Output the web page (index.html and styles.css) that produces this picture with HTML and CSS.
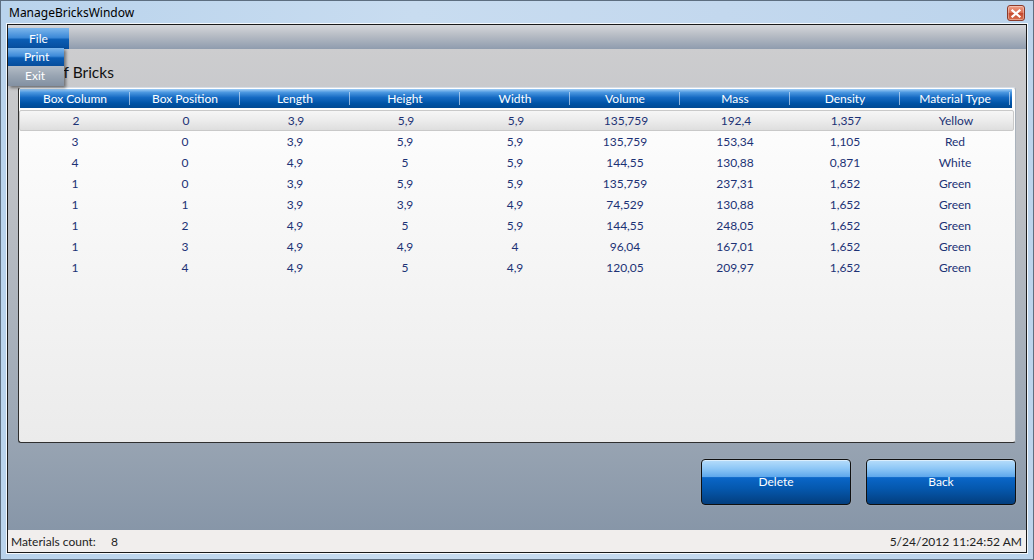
FILE: index.html
```html
<!DOCTYPE html>
<html>
<head>
<meta charset="utf-8">
<link rel="stylesheet" href="styles.css">
</head>
<body>
<div class="window">
  <div class="titlebar">
    <span class="title">ManageBricksWindow</span>
    <div class="close"><svg width="10" height="9" viewBox="0 0 10 9"><path d="M1.5 1.5 L8.5 7.5 M8.5 1.5 L1.5 7.5" stroke="#fff" stroke-width="2.2" stroke-linecap="square"/></svg></div>
  </div>
  <div class="client">
    <div class="menubar">
      <div class="menu-file">File</div>
    </div>
    <div class="content">
      <div class="heading">List of Bricks</div>
      <div class="grid">
        <div class="grid-head">
          <div class="hc">Box Column</div><div class="hc">Box Position</div><div class="hc">Length</div><div class="hc">Height</div><div class="hc">Width</div><div class="hc">Volume</div><div class="hc">Mass</div><div class="hc">Density</div><div class="hc">Material Type</div>
        </div>
        <div class="row selected"><div>2</div><div>0</div><div>3,9</div><div>5,9</div><div>5,9</div><div>135,759</div><div>192,4</div><div>1,357</div><div>Yellow</div></div>
        <div class="row"><div>3</div><div>0</div><div>3,9</div><div>5,9</div><div>5,9</div><div>135,759</div><div>153,34</div><div>1,105</div><div>Red</div></div>
        <div class="row"><div>4</div><div>0</div><div>4,9</div><div>5</div><div>5,9</div><div>144,55</div><div>130,88</div><div>0,871</div><div>White</div></div>
        <div class="row"><div>1</div><div>0</div><div>3,9</div><div>5,9</div><div>5,9</div><div>135,759</div><div>237,31</div><div>1,652</div><div>Green</div></div>
        <div class="row"><div>1</div><div>1</div><div>3,9</div><div>3,9</div><div>4,9</div><div>74,529</div><div>130,88</div><div>1,652</div><div>Green</div></div>
        <div class="row"><div>1</div><div>2</div><div>4,9</div><div>5</div><div>5,9</div><div>144,55</div><div>248,05</div><div>1,652</div><div>Green</div></div>
        <div class="row"><div>1</div><div>3</div><div>4,9</div><div>4,9</div><div>4</div><div>96,04</div><div>167,01</div><div>1,652</div><div>Green</div></div>
        <div class="row"><div>1</div><div>4</div><div>4,9</div><div>5</div><div>4,9</div><div>120,05</div><div>209,97</div><div>1,652</div><div>Green</div></div>
      </div>
      <div class="actions">
        <button class="btn">Delete</button>
        <button class="btn">Back</button>
      </div>
    </div>
    <div class="statusbar">
      <span class="count-label">Materials count:</span><span class="count">8</span>
      <span class="date">5/24/2012 11:24:52 AM</span>
    </div>
    <div class="dropdown">
      <div class="dd-item dd-print">Print</div>
      <div class="dd-item dd-exit">Exit</div>
    </div>
  </div>
</div>
</body>
</html>
```
FILE: styles.css
```css
* { box-sizing: border-box; }
html, body { margin: 0; padding: 0; }
body {
  width: 1034px;
  height: 560px;
  overflow: hidden;
  font-family: "Lato", "Noto Sans", sans-serif;
  font-size: 12px;
  background: #9fb8d2;
}
.window {
  width: 1034px;
  height: 560px;
  display: flex;
  flex-direction: column;
  border: 1px solid #5d6e80;
  background: linear-gradient(90deg, #b9d3ec 0%, #c8dcf0 40%, #c3d8ee 70%, #bcd4ec 100%);
  padding: 0 6px 6px 6px;
}
.titlebar {
  height: 23px;
  flex: none;
  display: flex;
  align-items: center;
  position: relative;
}
.title {
  font-family: "Noto Sans", sans-serif;
  font-size: 12px;
  color: #000;
  padding-left: 2px;
  margin-top: -1px;
}
.close {
  position: absolute;
  right: 2px;
  top: 4px;
  width: 18px;
  height: 16px;
  border: 1px solid #8b3a2a;
  border-radius: 3px;
  background: linear-gradient(#f0a088 0%, #d86a4e 50%, #c3472c 51%, #d9704e 100%);
  display: flex;
  align-items: center;
  justify-content: center;
  box-shadow: inset 0 0 0 1px rgba(255,255,255,0.35);
}
.client {
  flex: 1;
  display: flex;
  flex-direction: column;
  position: relative;
  border: 1px solid #1a1a1a;
  box-shadow: 0 0 0 1px #f4f8fc;
  min-height: 0;
}
.menubar {
  height: 24px;
  flex: none;
  background: linear-gradient(#d5d7db 0%, #b9bec6 40%, #8f9cae 100%);
  padding: 3px 0 0 0;
}
.menu-file {
  width: 61px;
  height: 21px;
  color: #fff;
  text-align: center;
  line-height: 21px;
  font-size: 12px;
  background: linear-gradient(#7cb6ec 0%, #3d8ad8 45%, #0b5db4 55%, #064d9c 100%);
}
.content {
  flex: 1;
  display: flex;
  flex-direction: column;
  padding: 0 10px 0 10px;
  background: linear-gradient(#cdcdcf 0%, #bdc0c5 30%, #9ea9b6 75%, #8796a8 100%);
}
.heading {
  font-size: 15.5px;
  color: #111;
  height: 22px;
  line-height: 22px;
  margin-top: 12px;
  padding-left: 9px;
}
.grid {
  margin-top: 4px;
  height: 356px;
  border: 1px solid;
  border-color: #d6dde6 #aab3bd #2f2f2f #2f2f2f;
  border-radius: 3px;
  padding: 1px 3px 0 1px;
  background: linear-gradient(#ffffff 0%, #f5f5f5 50%, #ebebeb 100%);
}
.grid-head {
  display: grid;
  grid-template-columns: repeat(9, 110px);
  height: 19px;
  background: linear-gradient(#9fcdf6 0%, #4b97e0 18%, #1469c2 45%, #0053a6 75%, #004993 100%);
}
.hc {
  color: #fff;
  text-align: center;
  line-height: 19px;
  position: relative;
}
.hc::after {
  content: "";
  position: absolute;
  right: 0;
  top: 3px;
  bottom: 3px;
  width: 1px;
  background: rgba(210, 228, 248, 0.65);
}
.row {
  display: grid;
  grid-template-columns: repeat(9, 110px);
  height: 21px;
  line-height: 21px;
  color: #1c3275;
  text-align: center;
}
.row.selected {
  margin-top: 2px;
  margin-right: -2px;
  margin-left: -1px;
  padding-left: 1px;
  border: 1px solid #c9c9c9;
  border-radius: 2px;
  line-height: 19px;
  background: linear-gradient(#f6f6f6 0%, #ececec 50%, #dedede 100%);
}
.actions {
  display: flex;
  justify-content: flex-end;
  gap: 15px;
  margin-top: 16px;
}
.btn {
  width: 150px;
  height: 46px;
  border: 1px solid #101010;
  border-radius: 4px;
  font-family: "Lato", "Noto Sans", sans-serif;
  font-size: 12px;
  color: #fff;
  background: linear-gradient(#b7ddfb 0%, #8cc6f6 20%, #5ea8ec 38%, #0a66c8 40%, #0558ae 65%, #033e7e 100%);
  box-shadow: inset 0 1px 0 rgba(255,255,255,0.5), 0 0 1px rgba(255,255,255,0.6);
  padding: 0 0 2px 0;
}
.statusbar {
  height: 22px;
  flex: none;
  background: #f1eeed;
  display: flex;
  align-items: center;
  padding: 0 4px 0 3px;
  color: #222;
  font-size: 12px;
}
.count-label { width: 100px; }
.date { margin-left: auto; }
.dropdown {
  position: absolute;
  left: 0;
  top: 23px;
  width: 56px;
  box-shadow: 2px 2px 3px rgba(0,0,0,0.45);
}
.dd-item {
  color: #fff;
  font-size: 12px;
  padding-left: 16px;
}
.dd-print {
  height: 18px;
  line-height: 18px;
  background: linear-gradient(#7cb6ec 0%, #3d8ad8 45%, #0b5db4 55%, #064d9c 100%);
}
.dd-exit {
  height: 20px;
  line-height: 20px;
  padding-left: 17px;
  background: linear-gradient(#b4bcc6 0%, #98a4b2 50%, #8290a2 100%);
}
```
